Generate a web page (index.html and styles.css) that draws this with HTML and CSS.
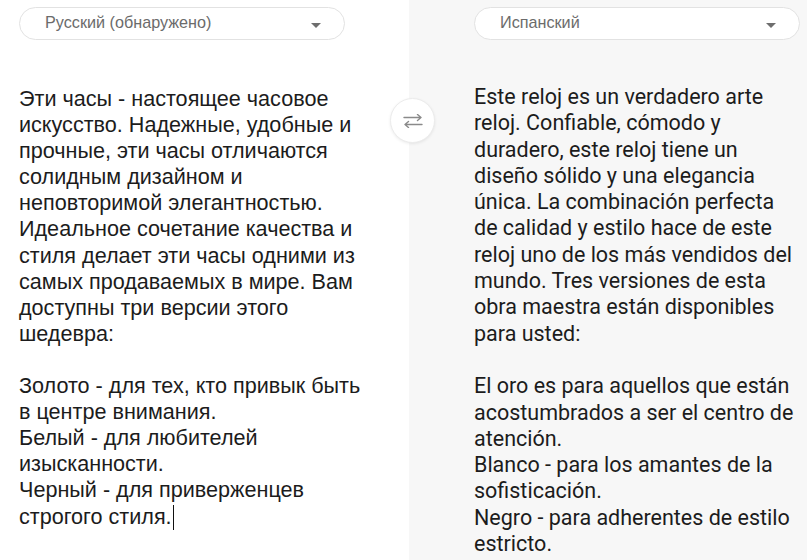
FILE: index.html
```html
<!DOCTYPE html>
<html lang="ru">
<head>
<meta charset="utf-8">
<link rel="stylesheet" href="styles.css">
</head>
<body>
<div class="app">
  <section class="pane pane-source">
    <div class="select">
      <span class="select-label">Русский (обнаружено)</span>
      <span class="caret"></span>
    </div>
    <div class="text text-source">Эти часы - настоящее часовое искусство. Надежные, удобные и прочные, эти часы отличаются солидным дизайном и неповторимой элегантностью. Идеальное сочетание качества и стиля делает эти часы одними из самых продаваемых в мире. Вам доступны три версии этого шедевра:<br><br>Золото - для тех, кто привык быть в центре внимания.<br>Белый - для любителей изысканности.<br>Черный - для приверженцев строгого стиля.<span class="cursor"></span></div>
  </section>
  <section class="pane pane-target">
    <div class="select">
      <span class="select-label">Испанский</span>
      <span class="caret"></span>
    </div>
    <div class="text text-target">Este reloj es un verdadero arte reloj. Confiable, cómodo y duradero, este reloj tiene un diseño sólido y una elegancia única. La combinación perfecta de calidad y estilo hace de este reloj uno de los más vendidos del mundo. Tres versiones de esta obra maestra están disponibles para usted:<br><br>El oro es para aquellos que están acostumbrados a ser el centro de atención.<br>Blanco - para los amantes de la sofisticación.<br>Negro - para adherentes de estilo estricto.</div>
  </section>
  <button class="swap" type="button" aria-label="swap">
    <svg width="20" height="14" viewBox="0 0 20 14" fill="none" stroke="#8a8a8a" stroke-width="1.4" stroke-linecap="round" stroke-linejoin="round">
      <path d="M1 3.5H18M14.5 0.5L18 3.5L14.5 6.5"/>
      <path d="M19 10.5H2M5.5 7.5L2 10.5L5.5 13.5"/>
    </svg>
  </button>
</div>
</body>
</html>
```
FILE: styles.css
```css
* { box-sizing: border-box; }
html, body { margin: 0; padding: 0; }
body {
  width: 807px;
  height: 560px;
  overflow: hidden;
  background: #ffffff;
}
.app {
  position: relative;
  display: grid;
  grid-template-columns: 409px 398px;
  height: 560px;
}
.pane {
  padding-top: 7px;
}
.pane-source {
  background: #ffffff;
  padding-left: 19px;
  padding-right: 44px;
}
.pane-target {
  background: #f7f7f7;
  padding-left: 65px;
  padding-right: 0;
}
.select {
  display: flex;
  align-items: center;
  justify-content: space-between;
  width: 326px;
  height: 33px;
  border: 1px solid #e2e2e2;
  border-radius: 17px;
  background: #ffffff;
  padding: 0 23px 0 25px;
}
.select-label {
  font-family: "Liberation Sans", Arial, sans-serif;
  font-size: 16.2px;
  color: #6b6b6b;
  margin-top: -2px;
}
.caret {
  width: 0;
  height: 0;
  border-left: 5.5px solid transparent;
  border-right: 5.5px solid transparent;
  border-top: 5px solid #6e6e6e;
  margin-top: 3px;
}
.text {
  color: #1c1c1c;
}
.text-source {
  font-family: "Liberation Sans", Arial, sans-serif;
  font-size: 21.6px;
  line-height: 26.1px;
  margin-top: 46px;
}
.text-target {
  font-family: Roboto, "Noto Sans", sans-serif;
  font-size: 21.5px;
  line-height: 26.3px;
  margin-top: 44px;
  padding-right: 4px;
}
.cursor {
  display: inline-block;
  width: 1px;
  height: 25px;
  background: #111;
  vertical-align: -6px;
  margin-left: 1px;
}
.swap {
  position: absolute;
  left: 390px;
  top: 98px;
  width: 45px;
  height: 45px;
  border-radius: 50%;
  border: 1px solid #ececec;
  background: #ffffff;
  box-shadow: 0 1px 3px rgba(0,0,0,0.08);
  display: flex;
  align-items: center;
  justify-content: center;
  padding: 0;
}
```
